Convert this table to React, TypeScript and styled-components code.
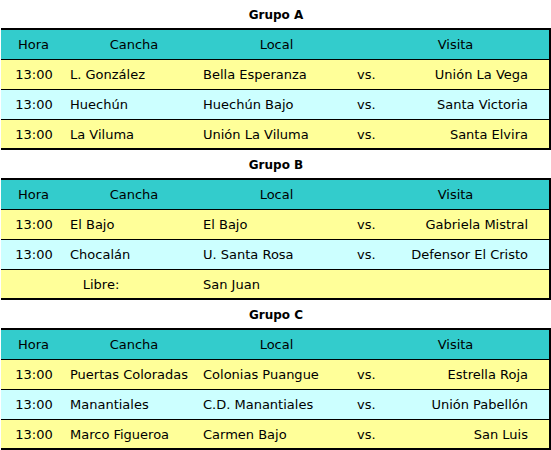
import React from "react";
import styled, { createGlobalStyle } from "styled-components";

const GlobalStyle = createGlobalStyle`
  html, body { margin: 0; padding: 0; background: #ffffff; }
  body { font-family: "DejaVu Sans", Verdana, sans-serif; color: #000; }
`;

const Page = styled.div`
  width: 550px;
  padding-left: 1px;
`;

const Title = styled.div`
  height: 28px;
  display: flex;
  align-items: center;
  justify-content: center;
  font-size: 12px;
  font-weight: bold;
  padding-top: 1px;
  box-sizing: border-box;
`;

const Table = styled.div`
  border-top: 2px solid #000;
  border-right: 2px solid #000;
`;

const Row = styled.div<{ $bg: string }>`
  display: grid;
  grid-template-columns: 65px 134px 152px 40px 1fr;
  height: 30px;
  box-sizing: border-box;
  background: ${(p) => p.$bg};
  border-bottom: 1px solid #000;
  font-size: 13px;
  &:last-child {
    border-bottom-width: 2px;
  }
`;

const Cell = styled.div<{ $align?: "left" | "center" | "right"; $span?: number; $pl?: number; $pr?: number }>`
  display: flex;
  align-items: center;
  white-space: nowrap;
  justify-content: ${(p) =>
    p.$align === "center" ? "center" : p.$align === "right" ? "flex-end" : "flex-start"};
  padding-left: ${(p) => p.$pl ?? 0}px;
  padding-right: ${(p) => p.$pr ?? 0}px;
  grid-column: span ${(p) => p.$span ?? 1};
`;

type Match = { cancha: string; local: string; visita: string };
type Group = { name: string; matches: Match[]; libre?: string };

const groups: Group[] = [
  {
    name: "Grupo A",
    matches: [
      { cancha: "L. González", local: "Bella Esperanza", visita: "Unión La Vega" },
      { cancha: "Huechún", local: "Huechún Bajo", visita: "Santa Victoria" },
      { cancha: "La Viluma", local: "Unión La Viluma", visita: "Santa Elvira" },
    ],
  },
  {
    name: "Grupo B",
    matches: [
      { cancha: "El Bajo", local: "El Bajo", visita: "Gabriela Mistral" },
      { cancha: "Chocalán", local: "U. Santa Rosa", visita: "Defensor El Cristo" },
    ],
    libre: "San Juan",
  },
  {
    name: "Grupo C",
    matches: [
      { cancha: "Puertas Coloradas", local: "Colonias Puangue", visita: "Estrella Roja" },
      { cancha: "Manantiales", local: "C.D. Manantiales", visita: "Unión Pabellón" },
      { cancha: "Marco Figueroa", local: "Carmen Bajo", visita: "San Luis" },
    ],
  },
];

const HEAD = "#33cccc";
const YELLOW = "#ffff99";
const LIGHT = "#ccffff";

export default function App() {
  return (
    <Page>
      <GlobalStyle />
      {groups.map((g) => (
        <section key={g.name}>
          <Title>{g.name}</Title>
          <Table>
            <Row $bg={HEAD}>
              <Cell $align="center" $pl={0}>Hora</Cell>
              <Cell $align="center" $pl={2}>Cancha</Cell>
              <Cell $align="center" $pl={1}>Local</Cell>
              <Cell $align="center" $span={2} $pl={10}>Visita</Cell>
            </Row>
            {g.matches.map((m, i) => (
              <Row key={i} $bg={i % 2 === 0 ? YELLOW : LIGHT}>
                <Cell $align="center" $pl={1}>13:00</Cell>
                <Cell $pl={4}>{m.cancha}</Cell>
                <Cell $pl={3}>{m.local}</Cell>
                <Cell $pl={5}>vs.</Cell>
                <Cell $align="right" $pr={21}>{m.visita}</Cell>
              </Row>
            ))}
            {g.libre && (
              <Row $bg={g.matches.length % 2 === 0 ? YELLOW : LIGHT}>
                <Cell $align="center" $span={2} $pl={1}>Libre:</Cell>
                <Cell $pl={3}>{g.libre}</Cell>
                <Cell $span={2} />
              </Row>
            )}
          </Table>
        </section>
      ))}
    </Page>
  );
}
